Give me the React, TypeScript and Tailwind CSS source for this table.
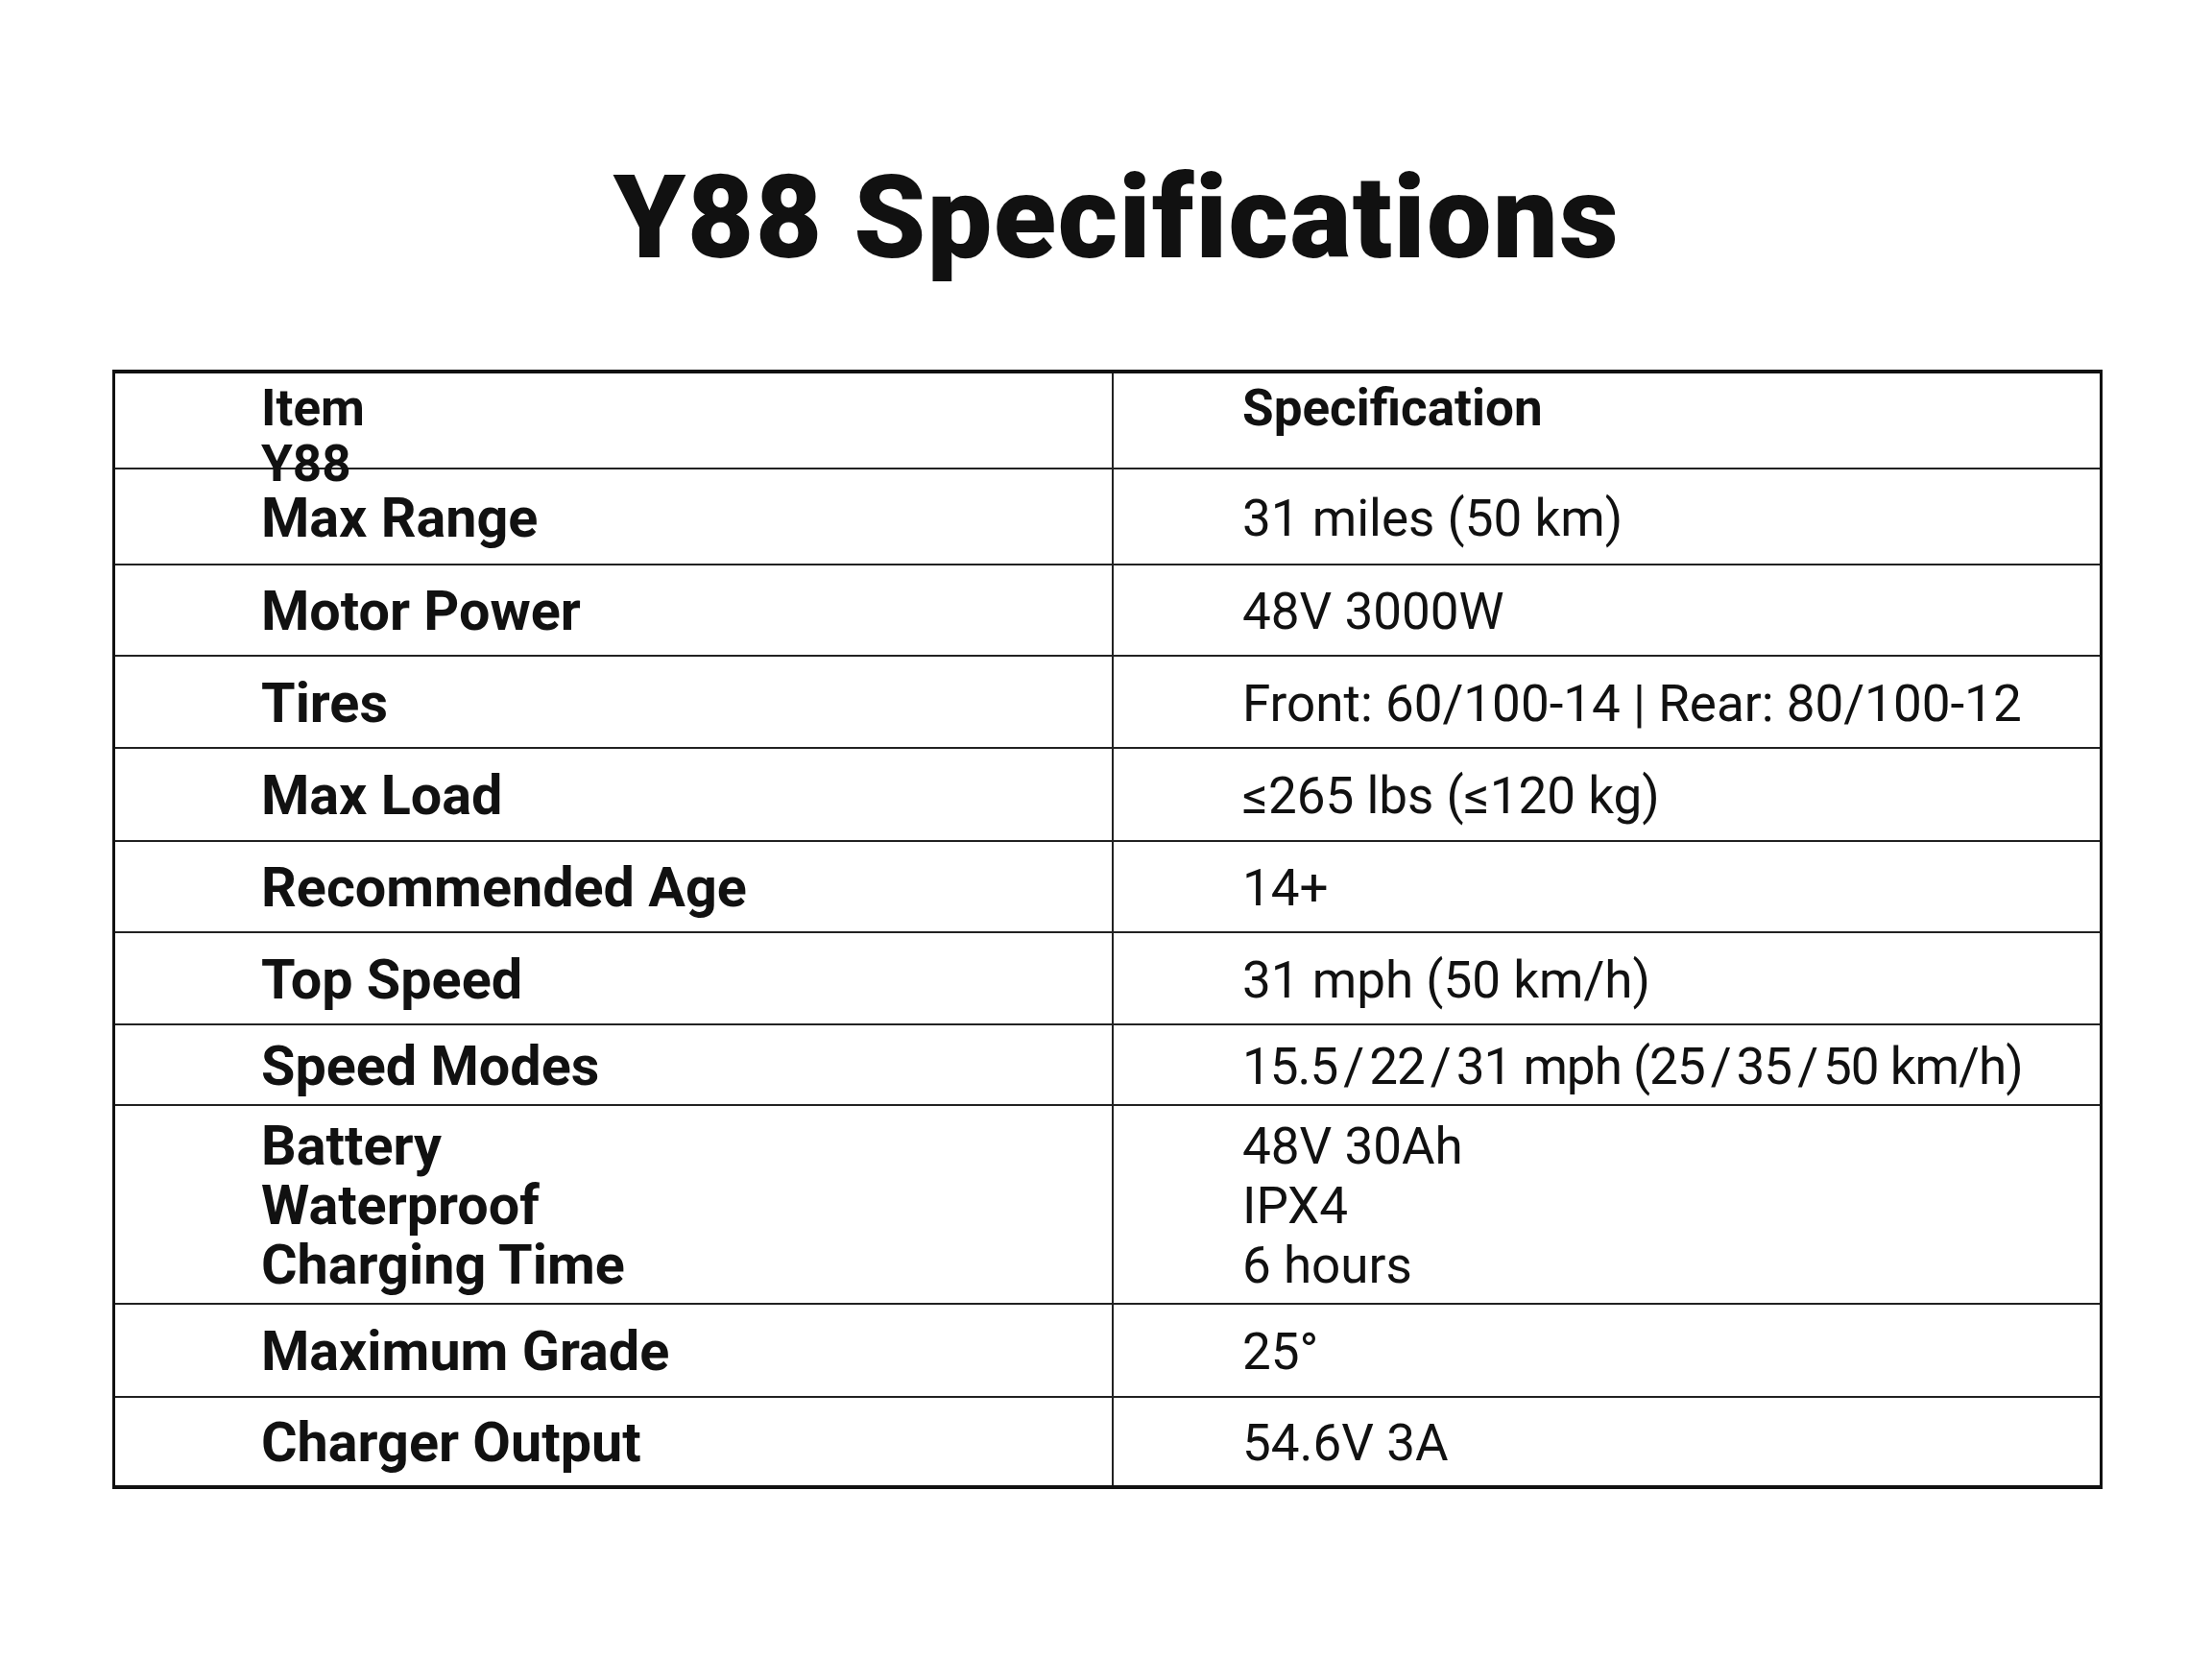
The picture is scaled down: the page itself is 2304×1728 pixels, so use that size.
import React from "react";

type Row = {
  h: string;
  left: React.ReactNode[];
  right: React.ReactNode[];
  header?: boolean;
  tight?: boolean;
};

const Sl = () => <span className="mx-[6px]">/</span>;

const rows: Row[] = [
  { h: "h-[100px]", left: ["Item", "Y88"], right: ["Specification"], header: true },
  { h: "h-[100px]", left: ["Max Range"], right: ["31 miles (50 km)"] },
  { h: "h-[95px]", left: ["Motor Power"], right: ["48V 3000W"] },
  { h: "h-[96px]", left: ["Tires"], right: ["Front: 60/100-14 | Rear: 80/100-12"] },
  { h: "h-[97px]", left: ["Max Load"], right: ["≤265 lbs (≤120 kg)"] },
  { h: "h-[95px]", left: ["Recommended Age"], right: ["14+"] },
  { h: "h-[96px]", left: ["Top Speed"], right: ["31 mph (50 km/h)"] },
  {
    h: "h-[84px]",
    left: ["Speed Modes"],
    right: [
      <>
        15.5<Sl />22<Sl />31 mph (25<Sl />35<Sl />50 km/h)
      </>,
    ],
    tight: true,
  },
  { h: "h-[207px]", left: ["Battery", "Waterproof", "Charging Time"], right: ["48V 30Ah", "IPX4", "6 hours"] },
  { h: "h-[97px]", left: ["Maximum Grade"], right: ["25°"] },
  { h: "h-[91px]", left: ["Charger Output"], right: ["54.6V 3A"] },
];

export default function App() {
  return (
    <div
      className="w-[2304px] h-[1728px] bg-white text-[#111] overflow-hidden"
      style={{ fontFamily: 'Roboto, "Liberation Sans", sans-serif' }}
    >
      <h1 className="pt-[167px] text-center text-[120px] leading-none font-black tracking-[1.5px] pl-[22px]">
        Y88 Specifications
      </h1>
      <div className="mt-[98px] ml-[117px] w-[2073px] border-4 border-[#111] border-x-[3px]">
        {rows.map((r, i) => (
          <div
            key={i}
            className={`grid grid-cols-[1040px_1fr] ${r.h} ${i < rows.length - 1 ? "border-b-2 border-[#222]" : ""}`}
          >
            {r.header ? (
              <>
                <div className="border-r-2 border-[#222] pl-[152px] pt-[7px] text-[53px] leading-[58px] font-bold whitespace-nowrap">
                  {r.left.map((t, k) => (
                    <div key={k}>{t}</div>
                  ))}
                </div>
                <div className="pl-[134px] pt-[7px] text-[53px] leading-[58px] font-bold whitespace-nowrap">
                  {r.right.map((t, k) => (
                    <div key={k}>{t}</div>
                  ))}
                </div>
              </>
            ) : (
              <>
                <div className="border-r-2 border-[#222] pl-[152px] pt-[3px] flex flex-col justify-center text-[57.5px] leading-[62px] font-bold whitespace-nowrap">
                  {r.left.map((t, k) => (
                    <div key={k}>{t}</div>
                  ))}
                </div>
                <div
                  className={`pl-[134px] pt-[3px] flex flex-col justify-center text-[53px] leading-[62px] whitespace-nowrap ${r.tight ? "tracking-[-1px]" : ""}`}
                >
                  {r.right.map((t, k) => (
                    <div key={k}>{t}</div>
                  ))}
                </div>
              </>
            )}
          </div>
        ))}
      </div>
    </div>
  );
}
